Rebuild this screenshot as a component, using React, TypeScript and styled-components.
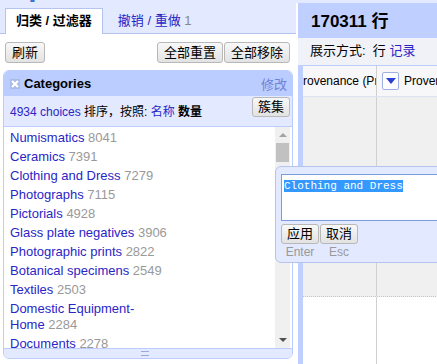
import React from 'react'
import styled, { createGlobalStyle } from 'styled-components'

const sans = `"Liberation Sans", Arial, "Noto Sans CJK SC", sans-serif`
const mono = `"Liberation Mono", "Courier New", monospace`

const GlobalStyle = createGlobalStyle`
    html, body {
        margin: 0;
        padding: 0;
        background: #ffffff;
        font-family: ${sans};
    }
`

const categories = [
    { name: 'Numismatics', count: 8041 },
    { name: 'Ceramics', count: 7391 },
    { name: 'Clothing and Dress', count: 7279 },
    { name: 'Photographs', count: 7115 },
    { name: 'Pictorials', count: 4928 },
    { name: 'Glass plate negatives', count: 3906 },
    { name: 'Photographic prints', count: 2822 },
    { name: 'Botanical specimens', count: 2549 },
    { name: 'Textiles', count: 2503 },
    { name: 'Domestic Equipment-Home', count: 2284 },
    { name: 'Documents', count: 2278 },
]

const CloseIcon = () => (
    <svg width="10" height="10" viewBox="0 0 10 10">
        <rect x="0" y="0" width="10" height="10" fill="#aabbe8" />
        <path d="M2 2 L8 8 M8 2 L2 8" stroke="#ffffff" strokeWidth="2.2" />
    </svg>
)

const App = () => {
    return <>
        <GlobalStyle />
        <Page>
            <LeftPane>
                <TopArea>
                    <LogoStrip><Logo>OpenRefine</Logo></LogoStrip>
                    <TabBar>
                        <Tab active>归类 / 过滤器</Tab>
                        <Tab><Link>撤销 / 重做</Link> <Muted>1</Muted></Tab>
                    </TabBar>
                </TopArea>
                <ButtonRow>
                    <Button>刷新</Button>
                    <ButtonGroup>
                        <Button>全部重置</Button>
                        <Button>全部移除</Button>
                    </ButtonGroup>
                </ButtonRow>
                <Facet>
                    <FacetHeader>
                        <FacetTitle><CloseIcon />Categories</FacetTitle>
                        <EditLink>修改</EditLink>
                    </FacetHeader>
                    <FacetControls>
                        <ControlsText>
                            <Link>4934 choices</Link> 排序，按照: <Link>名称</Link> <strong>数量</strong>
                        </ControlsText>
                        <SmallButton>簇集</SmallButton>
                    </FacetControls>
                    <FacetBody>
                        <Choices>
                            {categories.map(c => (
                                <Choice key={c.name}>
                                    <Link>{c.name}</Link> <Count>{c.count}</Count>
                                </Choice>
                            ))}
                        </Choices>
                        <ScrollBar>
                            <ScrollArrow up />
                            <ScrollThumb />
                            <ScrollTrack />
                            <ScrollArrow />
                        </ScrollBar>
                    </FacetBody>
                    <FacetFooter><Grip /></FacetFooter>
                </Facet>
            </LeftPane>

            <RightPane>
                <Summary>170311 行</Summary>
                <ViewBar>展示方式:&nbsp; 行 <Link>记录</Link></ViewBar>
                <Table>
                    <HeaderRow>
                        <FirstCol><ClippedName>Provenance (Production)</ClippedName></FirstCol>
                        <Col>
                            <MenuButton>
                                <svg width="10" height="6" viewBox="0 0 10 6"><path d="M0 0 H10 L5 6 Z" fill="#2b3fd0" /></svg>
                            </MenuButton>
                            <HeaderName>Provenance</HeaderName>
                        </Col>
                    </HeaderRow>
                    <DataRow>
                        <FirstCol />
                        <Col />
                    </DataRow>
                    <EmptyRow>
                        <FirstCol />
                        <Col />
                    </EmptyRow>
                </Table>
            </RightPane>

            <EditPopup>
                <EditField><Selected>Clothing and Dress</Selected></EditField>
                <PopupActions>
                    <ActionColumn>
                        <SmallButton>应用</SmallButton>
                        <KeyHint>Enter</KeyHint>
                    </ActionColumn>
                    <ActionColumn>
                        <SmallButton>取消</SmallButton>
                        <KeyHint>Esc</KeyHint>
                    </ActionColumn>
                </PopupActions>
            </EditPopup>
        </Page>
    </>
}

const Page = styled.div`
    position: relative;
    display: flex;
    width: 437px;
    height: 364px;
    overflow: hidden;
    font-family: ${sans};
`

const LeftPane = styled.div`
    display: flex;
    flex-direction: column;
    width: 296px;
    flex-shrink: 0;
`

const TopArea = styled.div`
    background: #e3e9ff;
    border-bottom: 1px solid #b4c4ee;
`

const LogoStrip = styled.div`
    height: 9px;
    overflow: hidden;
    padding-left: 4px;
`

const Logo = styled.div`
    margin-top: -31px;
    font-size: 30px;
    font-weight: bold;
    color: #3f74c9;
    letter-spacing: 1px;
`

const TabBar = styled.div`
    display: flex;
    align-items: flex-end;
    gap: 4px;
    padding-left: 5px;
    height: 24px;
`

const Tab = styled.div<{ active?: boolean }>`
    height: 24px;
    line-height: 24px;
    padding: 0 10px;
    font-size: 13px;
    font-weight: ${p => p.active ? 'bold' : 'normal'};
    color: #000;
    background: ${p => p.active ? '#ffffff' : 'transparent'};
    border: 1px solid ${p => p.active ? '#b4c4ee' : 'transparent'};
    border-bottom: none;
    margin-bottom: -1px;
    padding-bottom: 1px;
`

const Link = styled.span`
    color: #2a26c6;
`

const Muted = styled.span`
    color: #888;
`

const ButtonRow = styled.div`
    display: flex;
    justify-content: space-between;
    padding: 8px 6px 0 5px;
`

const ButtonGroup = styled.div`
    display: flex;
    gap: 1px;
`

const Button = styled.div`
    height: 19px;
    line-height: 19px;
    padding: 0 6px;
    font-size: 13px;
    color: #000;
    background: linear-gradient(#f8f8f8, #e2e2e2);
    border: 1px solid #b8b8b8;
    border-radius: 3px;
`

const SmallButton = styled(Button)`
    height: 18px;
    line-height: 18px;
    padding: 0 5px;
`

const Facet = styled.div`
    display: flex;
    flex-direction: column;
    margin: 7px 0 0 3px;
    width: 288px;
    border: 1px solid #bbccff;
    border-radius: 6px;
    overflow: hidden;
`

const FacetHeader = styled.div`
    display: flex;
    justify-content: space-between;
    align-items: center;
    height: 25px;
    padding: 0 5px 0 6px;
    background: #bbccff;
`

const FacetTitle = styled.div`
    display: flex;
    align-items: center;
    gap: 4px;
    font-size: 13px;
    font-weight: bold;
    color: #000;
`

const EditLink = styled.span`
    font-size: 13px;
    color: #6f82d9;
`

const FacetControls = styled.div`
    display: flex;
    justify-content: space-between;
    align-items: flex-start;
    height: 29px;
    padding: 1px 2px 0 6px;
    background: #e3e9ff;
    border-bottom: 1px solid #bbccff;
`

const ControlsText = styled.div`
    padding-top: 7px;
    font-size: 12px;
    line-height: 16px;
    color: #000;
`

const FacetBody = styled.div`
    display: flex;
    height: 221px;
    background: #fff;
`

const Choices = styled.div`
    flex: 1;
    padding: 2px 0 0 6px;
    overflow: hidden;
`

const Choice = styled.div`
    width: 158px;
    padding: 1px 0 2px;
    font-size: 13px;
    line-height: 16px;
`

const Count = styled.span`
    color: #999;
`

const ScrollBar = styled.div`
    display: flex;
    flex-direction: column;
    width: 15px;
    margin-right: 2px;
    background: #f0f0f0;
`

const ScrollArrow = styled.div<{ up?: boolean }>`
    height: 16px;
    display: flex;
    align-items: center;
    justify-content: center;
    &::before {
        content: '';
        border-left: 4px solid transparent;
        border-right: 4px solid transparent;
        ${p => p.up
            ? 'border-bottom: 4px solid #a3a3a3;'
            : 'border-top: 4px solid #505050;'}
    }
`

const ScrollThumb = styled.div`
    height: 19px;
    margin: 0 1px;
    background: #c1c1c1;
`

const ScrollTrack = styled.div`
    flex: 1;
`

const FacetFooter = styled.div`
    display: flex;
    justify-content: center;
    align-items: center;
    height: 9px;
    background: #e3e9ff;
    border-top: 1px solid #bbccff;
`

const Grip = styled.div`
    width: 8px;
    height: 3px;
    border-top: 1px solid #9aaae0;
    border-bottom: 1px solid #9aaae0;
    margin-left: -6px;
`

const RightPane = styled.div`
    display: flex;
    flex-direction: column;
    flex: 1;
    padding: 3px 0 0 2px;
    background: linear-gradient(#e3e9ff 3px, #ffffff 3px);
`

const Summary = styled.div`
    height: 35px;
    line-height: 37px;
    padding-left: 13px;
    background: #bfcfff;
    font-size: 17px;
    font-weight: bold;
    color: #000;
    white-space: nowrap;
`

const ViewBar = styled.div`
    height: 27px;
    line-height: 26px;
    padding-left: 12px;
    background: #f1f2f8;
    font-size: 13px;
    color: #000;
    white-space: nowrap;
`

const Table = styled.div`
    display: flex;
    flex-direction: column;
    flex: 1;
    border-left: 5px solid #bfcfff;
`

const HeaderRow = styled.div`
    display: flex;
    height: 30px;
    background: #f7f7f9;
    border-top: 1px solid #bbccff;
    border-bottom: 1px solid #dde2f0;
`

const DataRow = styled.div`
    display: flex;
    height: 199px;
    background: #f0f0f0;
    border-bottom: 1px dotted #c4c4c4;
`

const EmptyRow = styled.div`
    display: flex;
    flex: 1;
`

const FirstCol = styled.div`
    display: flex;
    align-items: center;
    width: 73px;
    flex-shrink: 0;
    overflow: hidden;
    border-right: 1px solid #d0d0d0;
`

const Col = styled.div`
    display: flex;
    align-items: center;
    gap: 5px;
    padding-left: 5px;
    overflow: hidden;
`

const ClippedName = styled.span`
    margin-left: -8px;
    font-size: 12px;
    color: #000;
    white-space: nowrap;
`

const HeaderName = styled.span`
    font-size: 12px;
    color: #000;
    white-space: nowrap;
`

const MenuButton = styled.div`
    display: flex;
    align-items: center;
    justify-content: center;
    width: 15px;
    height: 16px;
    flex-shrink: 0;
    background: #fff;
    border: 1px solid #9fb0e6;
    border-radius: 2px;
`

const EditPopup = styled.div`
    position: absolute;
    left: 275px;
    top: 166px;
    width: 200px;
    height: 97px;
    padding: 7px 0 0 5px;
    box-sizing: border-box;
    background: #e3e9ff;
    border: 1px solid #b4c4ee;
    border-radius: 6px;
`

const EditField = styled.div`
    height: 41px;
    padding: 2px 2px;
    line-height: 14px;
    background: #fff;
    border: 1px solid #7d9ce0;
`

const Selected = styled.span`
    font-family: ${mono};
    font-size: 11px;
    line-height: 14px;
    color: #fff;
    background: #3399ff;
`

const PopupActions = styled.div`
    display: flex;
    gap: 1px;
    margin-top: 3px;
`

const ActionColumn = styled.div`
    display: flex;
    flex-direction: column;
    align-items: center;
`

const KeyHint = styled.span`
    margin-top: 1px;
    font-size: 12px;
    line-height: 14px;
    color: #999;
`

export default App
